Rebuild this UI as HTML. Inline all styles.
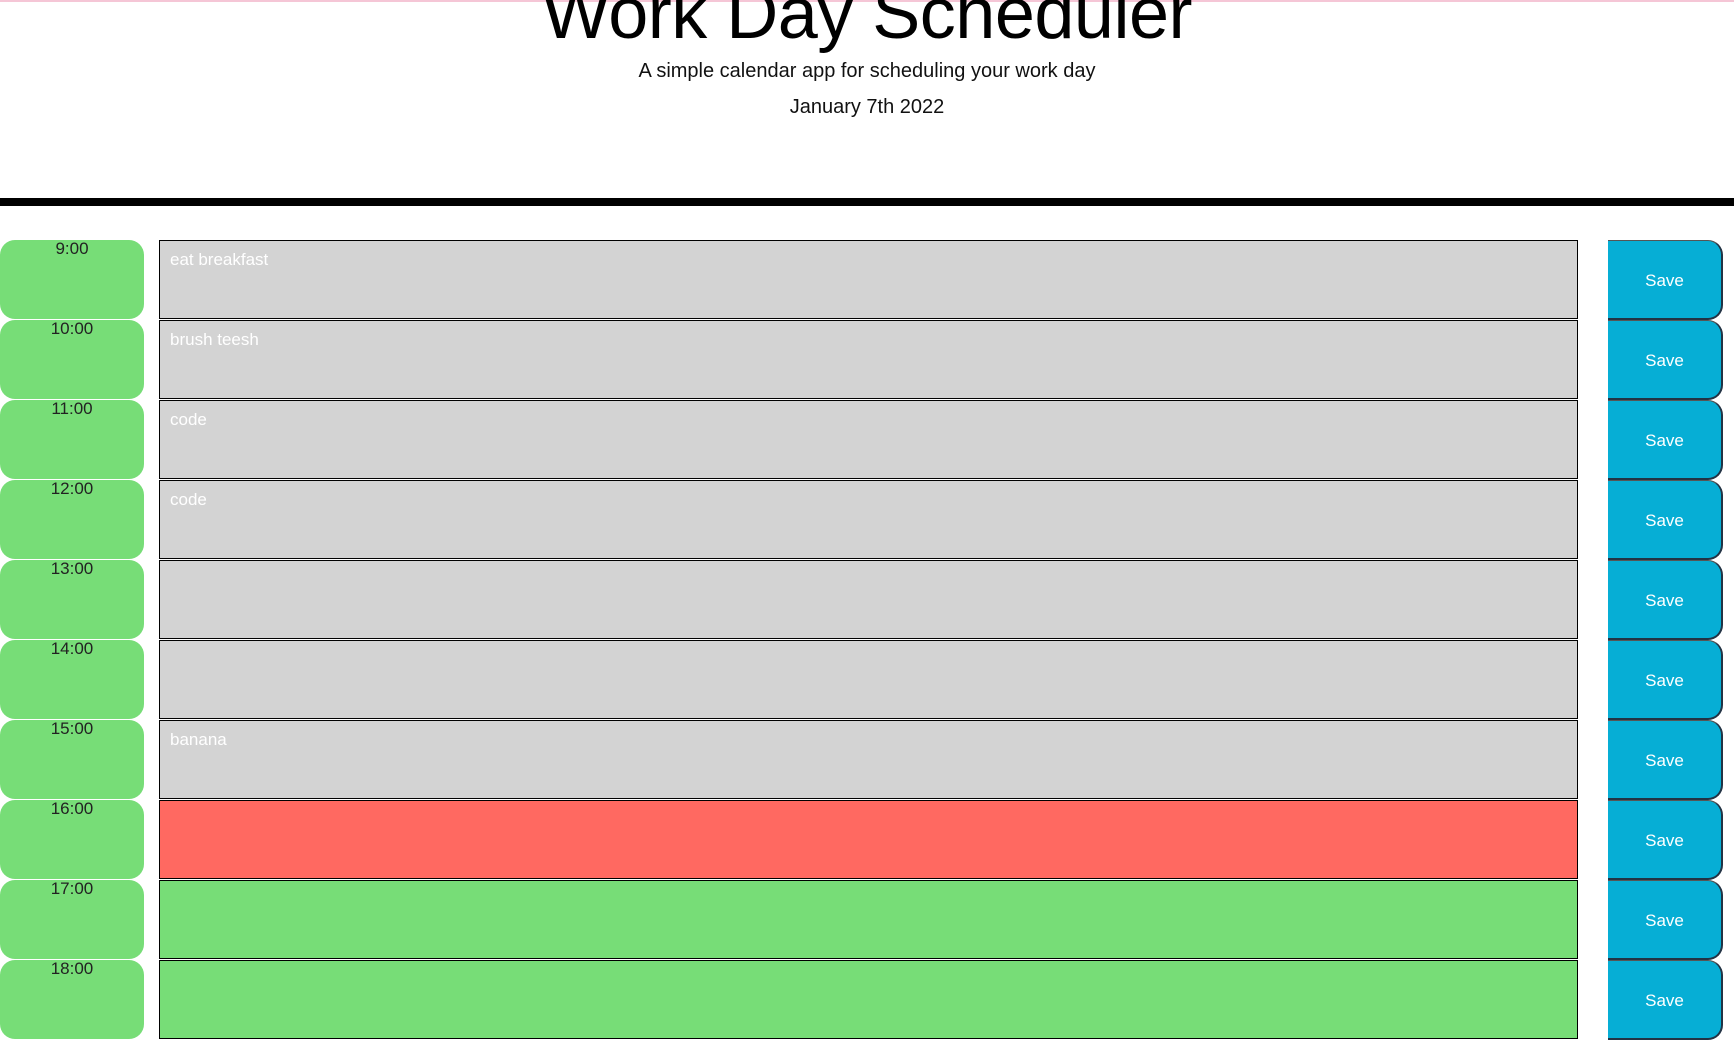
<!DOCTYPE html>
<html><head><meta charset="utf-8"><style>
html,body{margin:0;padding:0;background:#fff;width:1734px;height:1031px;overflow:hidden;font-family:"Liberation Sans","DejaVu Sans",sans-serif}
.pink{position:absolute;left:0;top:0;width:1734px;height:2px;background:#f5c6d6}
.title{position:absolute;left:0;width:1734px;text-align:center;top:-26px;font-size:72px;line-height:80px;color:#000;letter-spacing:-0.5px}
.sub{position:absolute;left:0;width:1734px;text-align:center;top:58px;font-size:20px;line-height:26px;color:#111}
.date{position:absolute;left:0;width:1734px;text-align:center;top:94px;font-size:20px;line-height:26px;color:#111}
.bar{position:absolute;left:0;top:198px;width:1734px;height:8px;background:#000}
.row{position:absolute;left:0;width:1734px;height:80px}
.time{position:absolute;left:0;top:0;width:144px;height:79px;background:#77dd77;border-radius:15px;text-align:center;font-size:17px;line-height:18px;color:#222}
.ta{position:absolute;left:159px;top:0;width:1417px;height:77px;border:1px solid #000;background:#d3d3d3;color:#fff;font-size:17px;padding:0;box-sizing:content-box}
.ta span{position:absolute;left:10px;top:9px}
.past{background:#d3d3d3}.present{background:#ff6961}.future{background:#77dd77}
.save{position:absolute;left:1608px;top:0;width:113px;height:77px;background:#06aed5;border-radius:0 15px 15px 0;border-right:2px solid #234;border-bottom:2px solid #234;border-top:1px solid #555;color:#fff;font-size:17px;line-height:79px;text-align:center}
</style></head><body>
<div class="pink"></div>
<div class="title">Work Day Scheduler</div>
<div class="sub">A simple calendar app for scheduling your work day</div>
<div class="date">January 7th 2022</div>
<div class="bar"></div>

<div class="row" style="top:240px"><div class="time">9:00</div><div class="ta past"><span>eat breakfast</span></div><div class="save">Save</div></div>
<div class="row" style="top:320px"><div class="time">10:00</div><div class="ta past"><span>brush teesh</span></div><div class="save">Save</div></div>
<div class="row" style="top:400px"><div class="time">11:00</div><div class="ta past"><span>code</span></div><div class="save">Save</div></div>
<div class="row" style="top:480px"><div class="time">12:00</div><div class="ta past"><span>code</span></div><div class="save">Save</div></div>
<div class="row" style="top:560px"><div class="time">13:00</div><div class="ta past"></div><div class="save">Save</div></div>
<div class="row" style="top:640px"><div class="time">14:00</div><div class="ta past"></div><div class="save">Save</div></div>
<div class="row" style="top:720px"><div class="time">15:00</div><div class="ta past"><span>banana</span></div><div class="save">Save</div></div>
<div class="row" style="top:800px"><div class="time">16:00</div><div class="ta present"></div><div class="save">Save</div></div>
<div class="row" style="top:880px"><div class="time">17:00</div><div class="ta future"></div><div class="save">Save</div></div>
<div class="row" style="top:960px"><div class="time">18:00</div><div class="ta future"></div><div class="save">Save</div></div>
</body></html>
